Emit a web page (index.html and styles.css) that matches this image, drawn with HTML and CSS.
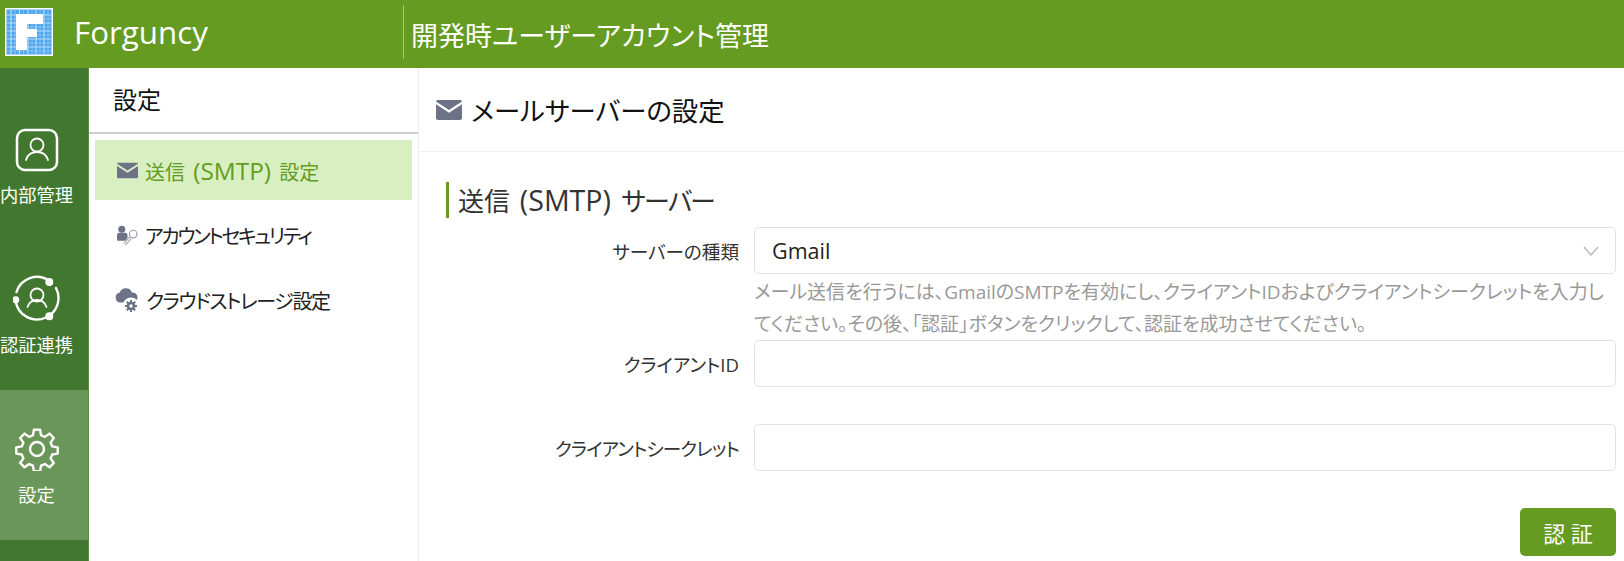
FILE: index.html
```html
<!DOCTYPE html>
<html lang="ja">
<head>
  <meta charset="UTF-8" />
  <title>開発時ユーザーアカウント管理</title>
  <link rel="stylesheet" href="styles.css">
</head>
<body>
  <header class="topbar">
    <div class="brand">
      <svg class="logo" viewBox="0 0 48 48">
        <rect width="48" height="48" fill="#fff"/>
        <rect x="1.500" y="1.500" width="45" height="45" fill="#4da6ee"/>
        <path d="M10 2v44M18.500 2v44M27 2v44M35 2v44M43 2v44M2 11h44M2 19h44M2 27h44M2 35h44M2 43h44" stroke="#8fc8f4" stroke-width=".8"/>
        <path d="M6 2v44M14.500 2v44M23 2v44M31 2v44M39 2v44M2 7h44M2 15h44M2 23h44M2 31h44M2 39h44" stroke="#b5dbf9" stroke-width="1.200"/>
        <path d="M11 6h27v10H22v5h10v8H22v13H11z" fill="#fff"/>
      </svg>
      <span class="brand-name">Forguncy</span>
    </div>
    <h1 class="page-title">開発時ユーザーアカウント管理</h1>
  </header>

  <div class="body-row">
    <nav class="rail">
      <a class="rail-item rail-first" href="#">
        <svg class="rail-icon" viewBox="0 0 44 44" fill="none" stroke="#fff" stroke-width="2.500">
          <rect x="2" y="2" width="40" height="40" rx="8"/>
          <g stroke-width="1.800" stroke-linecap="round">
            <circle cx="22" cy="17" r="6.500"/>
            <path d="M11 32c1.500-5 5.500-8 11-8s9.500 3 11 8"/>
          </g>
        </svg>
        <span>内部管理</span>
      </a>
      <a class="rail-item rail-second" href="#">
        <svg class="rail-icon rail-icon-wide" viewBox="0 0 48 48" fill="none" stroke="#fff" stroke-width="2.400" stroke-linecap="round">
          <path d="M3.500 18A21.500 21.500 0 0 1 36 6.500M43 14A21.500 21.500 0 0 1 36.500 41.500M2.800 28A21.500 21.500 0 0 0 33 43.500"/>
          <g stroke-width="1.800">
            <circle cx="24" cy="21" r="6.500"/>
            <path d="M14.500 33c1.500-4.500 5-7 9.500-7s8 2.500 9.500 7"/>
          </g>
          <circle cx="36.300" cy="8" r="4" fill="#fff" stroke="none"/>
          <circle cx="2.800" cy="25.700" r="3.500" fill="#fff" stroke="none"/>
          <circle cx="36.300" cy="42.300" r="4" fill="#fff" stroke="none"/>
        </svg>
        <span>認証連携</span>
      </a>
      <a class="rail-item rail-active" href="#">
        <svg class="rail-icon" viewBox="0 0 24 24" fill="none" stroke="#fff" stroke-width="1.300" stroke-linejoin="round">
          <path d="M10.300 1.500h3.400l.5 3 2.100.9 2.500-1.800 2.400 2.400-1.800 2.500.9 2.100 3 .5v3.400l-3 .5-.9 2.100 1.800 2.500-2.400 2.400-2.500-1.800-2.100.9-.5 3h-3.400l-.5-3-2.100-.9-2.500 1.800-2.400-2.400 1.800-2.500-.9-2.100-3-.5v-3.400l3-.5.9-2.100-1.800-2.500 2.400-2.400 2.500 1.800 2.100-.9z"/>
          <circle cx="12" cy="12" r="3.800"/>
        </svg>
        <span>設定</span>
      </a>
    </nav>

    <aside class="side-menu">
      <div class="side-title">設定</div>
      <ul class="side-list">
        <li class="side-item side-active">
          <svg class="side-icon" viewBox="0 0 21 16"><use href="#mail"/></svg>
          <span class="active-label">送信 <span class="latin">(SMTP)</span> 設定</span>
        </li>
        <li class="side-item">
          <svg class="side-icon" viewBox="0 0 22 21">
            <circle cx="5" cy="4" r="3.700" fill="#6d7286"/>
            <path d="M0 10c0-1.500 1-2.500 2.500-2.500h6C10 7.500 11 8.500 11 10v3l-2.500 3H0z" fill="#6d7286"/>
            <path d="M14 13l-6 6.500" stroke="#9a9dac" stroke-width="3.500"/>
            <path d="M14 13l-6 6.500" stroke="#fff" stroke-width="1.300"/>
            <circle cx="17" cy="9" r="4" fill="#fff" stroke="#9a9dac" stroke-width="1.300"/>
          </svg>
          <span class="narrow">アカウントセキュリティ</span>
        </li>
        <li class="side-item">
          <svg class="side-icon side-icon-cloud" viewBox="0 0 24 25">
            <path d="M5.500 14.500a5 5 0 0 1-.8-9.900A6.500 6.500 0 0 1 17 4.500a5 5 0 0 1 1 10z" fill="#6d7286"/>
            <circle cx="16" cy="18" r="8.500" fill="#fff"/>
            <circle cx="16" cy="18" r="3" fill="none" stroke="#6d7286" stroke-width="2.600"/>
            <path d="M16 12v3M16 21v3M10 18h3M19 18h3M11.800 13.800l2 2M18.200 20.200l2 2M11.800 22.200l2-2M18.200 15.800l2-2" stroke="#6d7286" stroke-width="2"/>
          </svg>
          <span class="narrower">クラウドストレージ設定</span>
        </li>
      </ul>
    </aside>

    <main class="content">
      <div class="content-head">
        <svg class="head-icon" viewBox="0 0 21 16"><use href="#mail"/></svg>
        <h2>メールサーバーの設定</h2>
      </div>
      <section class="form-area">
        <h3 class="section-title">送信 <span class="latin">(SMTP)</span> <span class="tight">サーバー</span></h3>

        <div class="field">
          <label>サーバーの種類</label>
          <div class="select-box">
            <span>Gmail</span>
            <svg class="chevron" viewBox="0 0 16 10" fill="none" stroke="#b4b4b4" stroke-width="1.200"><path d="M1 1l7 8 7-8"/></svg>
          </div>
        </div>
        <p class="help">メール送信を行うには、GmailのSMTPを有効にし、クライアントIDおよびクライアントシークレットを入力してください。その後、「認証」ボタンをクリックして、認証を成功させてください。</p>

        <div class="field field-id">
          <label>クライアントID</label>
          <div class="text-box"></div>
        </div>
        <div class="field field-secret">
          <label class="label-long">クライアントシークレット</label>
          <div class="text-box"></div>
        </div>

        <div class="actions">
          <button class="btn-auth">認 証</button>
        </div>
      </section>
    </main>
  </div>

  <svg class="defs" width="0" height="0">
    <symbol id="mail" viewBox="0 0 21 16">
      <path d="M1.500 0h18c.8 0 1.500.5 1.500 1.200L10.500 8 0 1.200C0 .5.700 0 1.500 0z" fill="#6d7286"/>
      <path d="M0 3.400l10.500 6.800L21 3.400v11.100c0 .8-.7 1.500-1.500 1.500h-18C.7 16 0 15.300 0 14.500z" fill="#6d7286"/>
    </symbol>
  </svg>
</body>
</html>
```

FILE: styles.css
```css
* {
  box-sizing: border-box;
}

html,
body {
  height: 100%;
}

body {
  margin: 0;
  overflow: hidden;
  font-family: "Open Sans", "Noto Sans CJK JP", sans-serif;
  font-feature-settings: "palt";
  color: #222;
}

.defs {
  position: absolute;
}

.topbar {
  height: 68px;
  background-color: #659b20;
  color: #fff;
  display: flex;
  align-items: center;
}

.brand {
  width: 404px;
  height: 54px;
  margin-top: -4px;
  padding-left: 5px;
  display: flex;
  align-items: center;
  gap: 21px;
  border-right: 1px solid #a8c87f;
}

.logo {
  width: 48px;
  height: 48px;
}

.brand-name {
  font-size: 31.3px;
}

.page-title {
  margin: 0 0 0 7px;
  font-size: 27px;
  font-weight: 400;
}

.body-row {
  height: 493px;
  display: flex;
}

.rail {
  width: 89px;
  background-color: #41772f;
  border-right: 1px solid #5b8d48;
  display: flex;
  flex-direction: column;
}

.rail-item {
  padding-right: 15px;
  display: flex;
  flex-direction: column;
  align-items: center;
  gap: 11px;
  color: #fff;
  font-size: 18.3px;
  line-height: 24px;
  text-decoration: none;
  white-space: nowrap;
}

.rail-first {
  height: 160px;
  padding-top: 60px;
}

.rail-second {
  height: 162px;
  padding-top: 46px;
}

.rail-active {
  height: 150px;
  padding-top: 37px;
  gap: 12px;
  background-color: #6b9659;
}

.rail-icon {
  width: 44px;
  height: 44px;
  flex: none;
}

.rail-icon-wide {
  width: 48px;
  height: 48px;
}

.side-menu {
  width: 330px;
  border-right: 1px solid #eee;
}

.side-title {
  height: 66px;
  padding: 15px 0 0 24px;
  font-size: 24px;
  line-height: 34px;
  color: #111;
  border-bottom: 2px solid #ccc;
}

.side-list {
  margin: 0;
  padding: 6px 6px 0;
  list-style: none;
}

.side-item {
  height: 65px;
  padding-left: 22px;
  display: flex;
  align-items: center;
  gap: 7px;
  font-size: 20px;
}

.side-active {
  height: 60px;
  background-color: #d8efc1;
  color: #659b20;
}

.side-list .side-active + .side-item {
  margin-top: 3px;
}

.active-label {
  word-spacing: 3px;
}

.active-label .latin {
  font-size: 1.22em;
}

.side-icon {
  width: 21px;
  height: 21px;
  flex: none;
}

.side-icon-cloud {
  width: 24px;
  height: 25px;
  margin-left: -2px;
}

.narrow {
  letter-spacing: -2.4px;
}

.narrower {
  letter-spacing: -1.4px;
}

.content {
  flex: 1;
}

.content-head {
  height: 84px;
  padding-left: 17px;
  display: flex;
  align-items: center;
  gap: 9px;
  border-bottom: 1px solid #f0f0f0;
}

.head-icon {
  width: 26px;
  height: 20px;
}

.content-head h2 {
  margin: 0;
  font-size: 26.4px;
  font-weight: 400;
  color: #111;
}

.form-area {
  padding: 30px 8px 0 27px;
}

.section-title {
  margin: 0;
  height: 36px;
  padding-left: 9px;
  border-left: 3px solid #659b20;
  font-size: 26px;
  line-height: 36px;
  font-weight: 400;
  font-feature-settings: normal;
  word-spacing: 3px;
  color: #333;
}

.section-title .latin {
  font-size: 1.1em;
}

.tight {
  letter-spacing: -2.8px;
}

.field {
  margin-top: 9px;
  display: flex;
  align-items: center;
  gap: 15px;
}

.field label {
  width: 293px;
  text-align: right;
  font-size: 18.6px;
  color: #333;
}

.field .label-long {
  letter-spacing: -0.85px;
}

.select-box,
.text-box {
  flex: 1;
  height: 47px;
  border: 1px solid #e3e3e3;
  border-radius: 5px;
}

.select-box {
  padding: 0 16px 0 17px;
  display: flex;
  align-items: center;
  justify-content: space-between;
  font-size: 21.5px;
  color: #222;
}

.chevron {
  width: 16px;
  height: 10px;
}

.help {
  margin: 2px 0 0 308px;
  font-size: 19px;
  line-height: 32px;
  color: #999;
}

.field.field-id {
  margin-top: 0;
}

.field.field-secret {
  margin-top: 37px;
}

.actions {
  margin-top: 37px;
  display: flex;
  justify-content: flex-end;
}

.btn-auth {
  width: 96px;
  height: 48px;
  border: none;
  border-radius: 5px;
  background-color: #659b20;
  color: #fff;
  font-family: inherit;
  font-size: 22px;
}
```
